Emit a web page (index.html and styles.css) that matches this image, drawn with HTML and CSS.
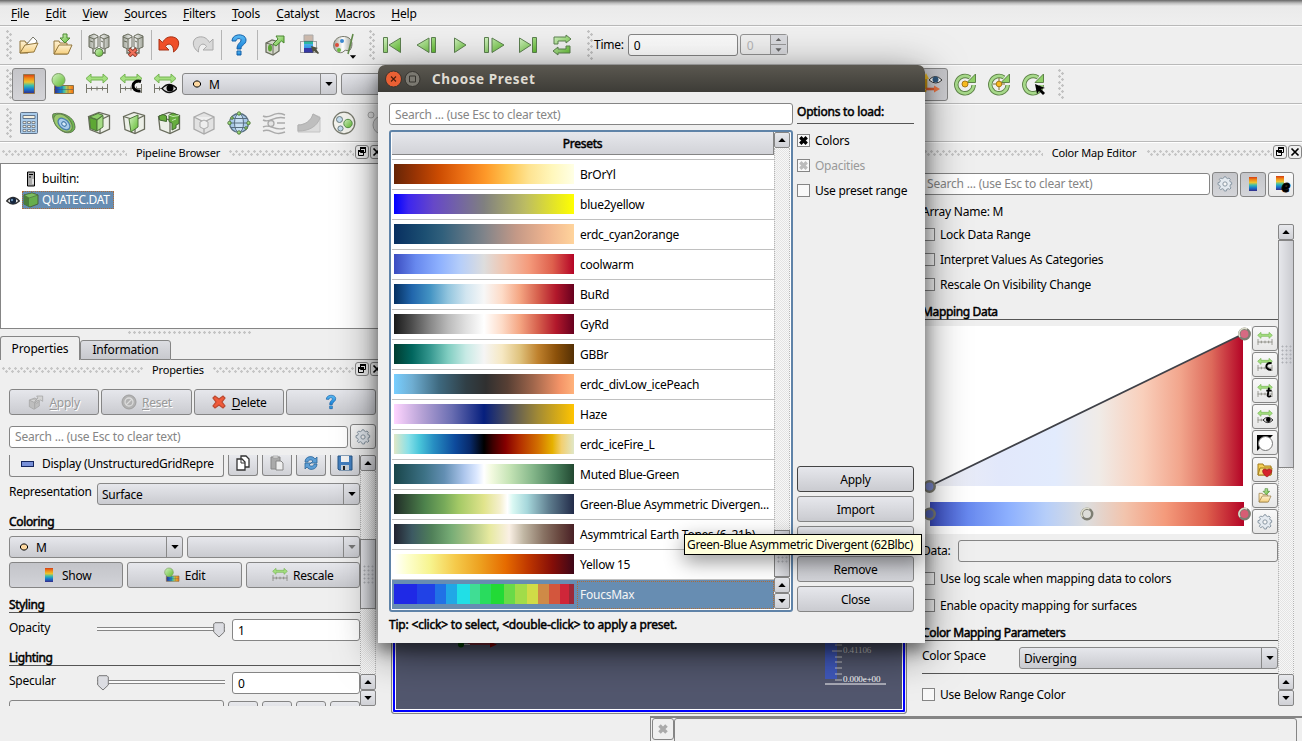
FILE: index.html
```html
<!DOCTYPE html>
<html lang="en">
<head>
<meta charset="utf-8">
<title>ParaView</title>
<link rel="stylesheet" href="styles.css">
</head>
<body>
<svg class="defs" width="0" height="0">
<defs>
<linearGradient id="gg" x1="0" y1="0" x2="1" y2="1"><stop offset="0" stop-color="#d5f3c5"/><stop offset="1" stop-color="#5db92c"/></linearGradient>
<linearGradient id="gf" x1="0" y1="0" x2="0" y2="1"><stop offset="0" stop-color="#fdf0d2"/><stop offset="1" stop-color="#f6cf7c"/></linearGradient>
<linearGradient id="gm" x1="0" y1="0" x2="1" y2="0"><stop offset="0" stop-color="#a3a79c"/><stop offset=".5" stop-color="#fff"/><stop offset="1" stop-color="#a3a79c"/></linearGradient>
<linearGradient id="gv" x1="0" y1="0" x2="0" y2="1"><stop offset="0" stop-color="#d33c14"/><stop offset=".2" stop-color="#f28a16"/><stop offset=".4" stop-color="#e8c530"/><stop offset=".58" stop-color="#38bfae"/><stop offset=".78" stop-color="#1676cf"/><stop offset="1" stop-color="#352a87"/></linearGradient>
<linearGradient id="gh" x1="0" y1="0" x2="1" y2="0"><stop offset="0" stop-color="#352a87"/><stop offset=".3" stop-color="#1676cf"/><stop offset=".5" stop-color="#38bfae"/><stop offset=".7" stop-color="#e8c530"/><stop offset="1" stop-color="#f26a16"/></linearGradient>
<linearGradient id="gb" x1="0" y1="0" x2="0" y2="1"><stop offset="0" stop-color="#5cbcf5"/><stop offset="1" stop-color="#1680d6"/></linearGradient>
<linearGradient id="cw" x1="0" y1="0" x2="1" y2="0"><stop offset="0" stop-color="#3b4cc0"/><stop offset=".12" stop-color="#6788ee"/><stop offset=".25" stop-color="#8db0fe"/><stop offset=".37" stop-color="#b6cef9"/><stop offset=".5" stop-color="#dddddd"/><stop offset=".62" stop-color="#f2c4ad"/><stop offset=".75" stop-color="#f49a7b"/><stop offset=".88" stop-color="#de604d"/><stop offset="1" stop-color="#b40426"/></linearGradient>
<linearGradient id="cwp" x1="0" y1="0" x2="1" y2="0"><stop offset="0" stop-color="#eeeef2"/><stop offset=".22" stop-color="#e2e8fb"/><stop offset=".4" stop-color="#e2ebfd"/><stop offset=".54" stop-color="#f0ebe7"/><stop offset=".68" stop-color="#f9cfbb"/><stop offset=".8" stop-color="#f2a58c"/><stop offset=".9" stop-color="#dd6a5b"/><stop offset="1" stop-color="#b40426"/></linearGradient>
<symbol id="open" viewBox="0 0 24 24"><path d="M3 20V8h5l1 2h2v10z" fill="url(#gf)" stroke="#92763c"/><path d="M9 12l7-8 4 4-5 9z" fill="#fff" stroke="#77776a"/><path d="M3 20l5-8 13-2-4 9z" fill="url(#gf)" stroke="#92763c"/></symbol>
<symbol id="save" viewBox="0 0 24 24"><path d="M3 21V8h5l1 2h7v11z" fill="url(#gf)" stroke="#92763c"/><path d="M3 21l5-9h13l-4 9z" fill="url(#gf)" stroke="#92763c"/><path d="M12 1h4v4h3l-5 5-5-5h3z" fill="url(#gg)" stroke="#4f8a35"/></symbol>
<symbol id="srv" viewBox="0 0 24 24"><path d="M2 3l5-2 4 2v11l-4 2-5-2zM13 3l4-2 5 2v11l-5 2-4-2z" fill="url(#gm)" stroke="#686b5c"/><path d="M2 4l5 2 4-2M13 4l4 2 5-2M7 6v9M17 6v9M3 8l3 1M14 8l2 1" fill="none" stroke="#686b5c"/><path d="M6 16v4h4M18 16v4h-4" fill="none" stroke="#686b5c" stroke-width="1.3"/></symbol>
<symbol id="con" viewBox="0 0 24 24"><use href="#srv" width="24" height="24"/><circle cx="12" cy="19.500" r="4" fill="url(#gg)" stroke="#5b7a48"/></symbol>
<symbol id="dis" viewBox="0 0 24 24"><use href="#srv" width="24" height="24"/><path d="M8 16l7.500 7m0-7L8 23" stroke="#8e3a2a" stroke-width="3.800"/><path d="M8.500 16.500l6.500 6m0-6l-6.500 6" stroke="#f0705a" stroke-width="2.200"/></symbol>
<symbol id="undo" viewBox="0 0 24 24"><path d="M2 6v11h10l-3.500-3.500C11 9 17 11 16.500 19 24 14 23 5 16 4 11.500 3.300 8 5 5.500 9.500z" fill="#ef4f28" stroke="#a83316"/></symbol>
<symbol id="redo" viewBox="0 0 24 24"><path d="M22 6v11H12l3.500-3.500C13 9 7 11 7.500 19 0 14 1 5 8 4c4.500-.7 8 1 10.500 5.500z" fill="#d9d9d9" stroke="#aaa"/></symbol>
<symbol id="help" viewBox="0 0 24 24"><path d="M5 8c0-8 14-8 14-1 0 5-5 4.500-5 9h-4c0-6 4-6 4-9 0-2-5-2-5 1z" fill="url(#gb)" stroke="#1560a8"/><path d="M10 18h4v4h-4z" fill="url(#gb)" stroke="#1560a8"/></symbol>
<symbol id="box" viewBox="0 0 24 24"><path d="M3 10l6-3 7 2v9l-6 4-7-3z" fill="#d2d5c8" stroke="#686b5c" stroke-width="1.300"/><path d="M3 10l7 2 6-3M10 12v10" fill="none" stroke="#686b5c"/><ellipse cx="7" cy="15" rx="2" ry="3.500" fill="#5ca536"/><path d="M10 11l5-5-2-3h8v7l-2.500-2-5.500 5z" fill="url(#gg)" stroke="#4a8530"/></symbol>
<symbol id="sel" viewBox="0 0 24 24"><path d="M7 2h9v6H7z" fill="#cbb8ab" stroke="#aaa"/><path d="M7 8h9v12H7z" fill="url(#gb)"/><path d="M7 8h9v3H7z" fill="#2db8a2"/><path d="M7 15h9v5H7z" fill="#3638a4"/><path d="M3.500 8.500h16v11h-16z" fill="none" stroke="#555" stroke-dasharray="1 1"/><path d="M14 13l7 2-2 1 3 4-1 1-4-3-1 2z" fill="#51513f"/></symbol>
<symbol id="pal" viewBox="0 0 24 24"><path d="M3 15C1 6 9 2 16 4c6 2 6 9 3 13-2 2-4-1-6 1-2 3-8 2-10-3z" fill="url(#gm)" stroke="#77796b"/><circle cx="6" cy="12" r="2" fill="#dd4a38"/><circle cx="11" cy="8" r="2" fill="#3a88cf"/><circle cx="8" cy="17" r="2" fill="#6cba42"/><path d="M22 1l-5 20" stroke="#608948" stroke-width="1.600"/></symbol>
<symbol id="first" viewBox="0 0 24 24"><path d="M3.500 4.500h4v15h-4zM20.500 5v14.500L9 12z" fill="url(#gg)" stroke="#5d8150"/></symbol>
<symbol id="prev" viewBox="0 0 24 24"><path d="M17.500 4.500h4v15h-4zM15 5v14.500L3 12z" fill="url(#gg)" stroke="#5d8150"/></symbol>
<symbol id="play" viewBox="0 0 24 24"><path d="M6.500 5v14.500L18 12z" fill="url(#gg)" stroke="#5d8150"/></symbol>
<symbol id="next" viewBox="0 0 24 24"><path d="M2.500 4.500h4v15h-4zM10 5v14.500L22 12z" fill="url(#gg)" stroke="#5d8150"/></symbol>
<symbol id="last" viewBox="0 0 24 24"><path d="M16.500 4.500h4v15h-4zM3.500 5v14.500L15 12z" fill="url(#gg)" stroke="#5d8150"/></symbol>
<symbol id="loop" viewBox="0 0 24 24"><path d="M4 11V4h12V2l5 4-5 4V8H8v3zM20 13v7H8v2l-5-4 5-4v2h8v-3z" fill="url(#gg)" stroke="#5d8150"/></symbol>
<symbol id="bar" viewBox="0 0 24 24"><path d="M6.500 2.500h11v19h-11z" fill="url(#gv)" stroke="#93754b"/></symbol>
<symbol id="edit" viewBox="0 0 24 24"><path d="M3.500 13.500h19v8h-19z" fill="url(#gh)" stroke="#887249"/><path d="M3 17.500h19M11 14v7M17 14v7" stroke="#3a5170" stroke-opacity=".5"/><circle cx="7.500" cy="8" r="6.500" fill="url(#gg)" stroke="#7ea066"/></symbol>
<symbol id="arr" viewBox="0 0 24 24"><path d="M1 6.500L6 2v3h12V2l5 4.500L18 11V8H6v3z" fill="#a4e07f" stroke="#74b352"/></symbol>
<symbol id="rul" viewBox="0 0 24 24"><path d="M1.500 12v9M22.500 12v9M1 16.500h22M6.500 14.500v4M12 14.500v4M17.500 14.500v4" fill="none" stroke="#77776c"/></symbol>
<symbol id="rs" viewBox="0 0 24 24"><use href="#arr" width="24" height="24"/><use href="#rul" width="24" height="24"/></symbol>
<symbol id="rc" viewBox="0 0 24 24"><use href="#rs" width="24" height="24"/><path d="M22 9.500c-10-3-11 11-.5 9.500" fill="none" stroke="#000" stroke-width="3"/></symbol>
<symbol id="rt" viewBox="0 0 24 24"><use href="#rs" width="24" height="24"/><path d="M18 7l-2 12q2 3 5 0M14 11.500h8" fill="none" stroke="#000" stroke-width="2.800"/></symbol>
<symbol id="rv" viewBox="0 0 24 24"><use href="#arr" width="24" height="24"/><path d="M1.500 12v9M1 16.500h11M6.500 14.500v4" stroke="#77776c"/><path d="M9 16.500q7-8 15 0-8 8-15 0z" fill="#ddd" stroke="#111" stroke-width="1.300"/><circle cx="17" cy="16" r="3.500"/></symbol>
<symbol id="calc" viewBox="0 0 24 24"><rect x="3.500" y="1.500" width="17" height="21" rx="1" fill="#a9cbea" stroke="#62748a"/><path d="M6 4.500h12v3H6z" fill="#f5f0df" stroke="#62748a"/><path d="M6 10.500h3v2H6zM10.500 10.500h3v2h-3zM15 10.500h3v2h-3zM6 14.500h3v2H6zM10.500 14.500h3v2h-3zM15 14.500h3v2h-3zM6 18.500h3v2H6zM10.500 18.500h3v2h-3zM15 18.500h3v2h-3z" fill="#efede0" stroke="#5b6674" stroke-width=".7"/></symbol>
<symbol id="cont" viewBox="0 0 24 24"><path d="M1 3c9-3 22 3 22 13 0 5-6 7-11 5C5 18-1 8 1 3z" fill="#6eba4e" stroke="#617653"/><ellipse cx="11" cy="12" rx="11" ry="7" transform="rotate(43 11 12)" fill="#9cc96f" stroke="#61804e"/><ellipse cx="12" cy="13" rx="7" ry="4.500" transform="rotate(43 12 13)" fill="#a9cceb" stroke="#4a7eac" stroke-width="1.300"/><ellipse cx="12" cy="13" rx="2.500" ry="2" transform="rotate(43 12 13)" fill="#d8eaf8" stroke="#4a7eac"/></symbol>
<symbol id="cube" viewBox="0 0 24 24"><path d="M1.500 5.500L12 1.500l10.500 3V18L13 22.500l-10-4z" fill="#ecefe7" stroke="#686b5c" stroke-width="1.300"/><path d="M1.500 5.500L13 9l9.500-4.500M13 9v13.500" fill="none" stroke="#686b5c" stroke-width="1.300"/></symbol>
<symbol id="clip" viewBox="0 0 24 24"><use href="#cube" width="24" height="24"/><path d="M2.500 6.500L10 9v11l-6.500-2.500z" fill="#5da834" stroke="#4e753b"/><path d="M10 9l6-4.500V16l-6 4z" fill="#a5dc85" stroke="#4e753b"/><path d="M2.500 6L11 2.500l5 1.700L10 8.500z" fill="#8fd06a" stroke="#4e753b"/></symbol>
<symbol id="slice" viewBox="0 0 24 24"><use href="#cube" width="24" height="24"/><path d="M7 8l9-4v12l-7 5z" fill="url(#gg)" stroke="#4e753b"/></symbol>
<symbol id="thr" viewBox="0 0 24 24"><use href="#cube" width="24" height="24"/><path d="M2 5l4-1.500L9.500 5v5.500L2.500 9zM12 4l4-2 6 2.500v8l-3 1.500v3l-4 2v-7l-3-1.500z" fill="#66ad3d" stroke="#436832"/><path d="M12 4l4 1.500 6-1M15 9.500l4-1.500" fill="none" stroke="#c6e8b2"/></symbol>
<symbol id="ext" viewBox="0 0 24 24"><path d="M2 6l10-4.500L22 6v12l-10 5-10-5zM2 6l10 5 10-5M12 11v12" fill="#e2e2e2" stroke="#aaa" stroke-width="1.300"/><path d="M8 11l4-2 4 2v5l-4 2-4-2z" fill="#eee" stroke="#aaa"/></symbol>
<symbol id="glyph" viewBox="0 0 24 24"><circle cx="12" cy="12" r="9.500" fill="#a9c9e8" stroke="#586e80" stroke-width="1.300"/><ellipse cx="12" cy="12" rx="4.500" ry="9.500" fill="#c7dff3" stroke="#586e80"/><path d="M2.500 12h19M4 7.500h16M4 16.500h16" stroke="#586e80"/><g fill="url(#gg)" stroke="#567d42"><circle cx="12" cy="2.500" r="1.700"/><circle cx="12" cy="21.500" r="1.700"/><circle cx="2.500" cy="12" r="1.700"/><circle cx="21.500" cy="12" r="1.700"/><circle cx="5" cy="7" r="1.300"/><circle cx="19" cy="17" r="1.300"/></g></symbol>
<symbol id="stream" viewBox="0 0 24 24"><path d="M1 5c8 4 10-6 22-1M1 9c8 4 10-5 22-2M1 20c8-4 10 6 22 1M1 16c8-4 11 5 22 1M15 12h8" fill="none" stroke="#aaa" stroke-width="1.400"/><circle cx="9" cy="12.500" r="3" fill="#e5e5e5" stroke="#aaa" stroke-width="1.300"/></symbol>
<symbol id="warp" viewBox="0 0 24 24"><path d="M1 21V14c7 0 13-4 15-11l7 3v15z" fill="#dcdcdc" stroke="#c4c4c4"/><path d="M1 14c7 0 13-4 15-11l7 4c-3 8-10 13-22 13z" fill="#bebebe" stroke="#b2b2b2"/></symbol>
<symbol id="grp" viewBox="0 0 24 24"><circle cx="12" cy="12" r="10.800" fill="#f4f4ee" stroke="#77796d" stroke-width="1.300"/><circle cx="7.500" cy="8.500" r="3" fill="#c5ddef" stroke="#687b7e"/><circle cx="16" cy="12.500" r="4.200" fill="url(#gg)" stroke="#57904a"/><circle cx="8.500" cy="17.500" r="2.600" fill="#c5ddef" stroke="#687b7e"/></symbol>
<symbol id="lev" viewBox="0 0 24 24"><g fill="#e2e2e2" stroke="#aaa"><circle cx="4" cy="4" r="3"/><circle cx="15" cy="14" r="9"/></g></symbol>
<symbol id="rot" viewBox="0 0 24 24"><path d="M17 5.500A8.700 8.700 0 1 0 20.700 13" fill="none" stroke="#5e8348" stroke-width="4.500"/><path d="M17 5.500A8.700 8.700 0 1 0 20.700 13" fill="none" stroke="#a7d98a" stroke-width="2.600"/><path d="M22.500 2v8.500H14z" fill="#8fd067" stroke="#5e8348"/></symbol>
<symbol id="r1" viewBox="0 0 24 24"><use href="#rot" width="24" height="24"/><circle cx="12" cy="12" r="3" fill="#f8bb20" stroke="#a87918"/></symbol>
<symbol id="r2" viewBox="0 0 24 24"><use href="#rot" width="24" height="24"/><path d="M12 6v12M6 12h12" stroke="#807030"/><circle cx="12" cy="12" r="2.800" fill="#f8bb20" stroke="#a87918"/></symbol>
<symbol id="r3" viewBox="0 0 24 24"><use href="#rot" width="24" height="24"/><path d="M14 12l10 4-4 1 4 4-2 2-4-4-2 3z"/></symbol>
<symbol id="axes" viewBox="0 0 24 24"><path d="M7 18L1 23M7 17V5" stroke="#c59312" stroke-width="2.600"/><path d="M7 1l3 6H4z" fill="#e4b325"/><path d="M7 17h9" stroke="#d75b30" stroke-width="2.600"/><path d="M21 17l-6-3.500v7z" fill="#ed7542"/><path d="M10 8q6-7 13 0-6 6-13 0z" fill="#fff" stroke="#333"/><circle cx="16.500" cy="7.500" r="3" fill="#30587d"/></symbol>
<symbol id="gear" viewBox="0 0 24 24"><path d="M10 3l1-2h2l1 2 2 1 2-1 2 2-1 2 1 2 2 .5v3L20 13l-.5 2.500L21 18l-2 2-2-1-2.500 1L14 22.500h-3L10 20l-2-1-2.500 1.500-2-2L5 16l-1-2-2.500-1v-3L4 9.500 5 7 3.500 5l2-2L8 4z" fill="#e4eaf0" stroke="#8997a3" stroke-width="1.500"/><circle cx="12" cy="12" r="3.200" fill="#f7f7f7" stroke="#8997a3" stroke-width="1.500"/></symbol>
<symbol id="float" viewBox="0 0 12 12"><path d="M4.500 2.500h5v4h-5zM2.500 5.500h5v4h-5z" fill="#efefef" stroke="#000"/><path d="M4 2h6M2 5h6" stroke="#000" stroke-width="1.800"/></symbol>
<symbol id="x" viewBox="0 0 12 12"><path d="M2.500 2.500l7 7m0-7l-7 7" stroke="#000" stroke-width="1.700"/></symbol>
<symbol id="cross" viewBox="0 0 12 12"><path d="M2.500 2.500l7 7m0-7l-7 7" stroke="currentColor" stroke-width="3.600"/></symbol>
<symbol id="up" viewBox="0 0 12 12"><path d="M2.300 8h7.400L6 4z" fill="currentColor"/></symbol>
<symbol id="dn" viewBox="0 0 12 12"><path d="M2.300 4h7.400L6 8z" fill="currentColor"/></symbol>
<symbol id="pt" viewBox="0 0 12 12"><path d="M4.500 3h3l2 2v2l-2 2h-3l-2-2V5z" fill="#fdd8a0" stroke="#000"/></symbol>
<symbol id="srvs" viewBox="0 0 12 16"><path d="M2.500 1h7v14h-7z" fill="#aaa" stroke="#000"/><path d="M4 3.500h4M4 6h2" stroke="#000"/><path d="M7 8h2v5H7z" fill="#ddd"/></symbol>
<symbol id="eye" viewBox="0 0 14 12"><path d="M.7 6Q7-1 13.300 6 7 12 .7 6z" fill="#fff" stroke="#333" stroke-width="1.400"/><circle cx="7" cy="5.700" r="3.200" fill="#16263d"/><circle cx="6" cy="5" r="1.200" fill="#6d93b8"/></symbol>
<symbol id="gcube" viewBox="0 0 16 16"><path d="M1 3l8-2 6 2v9l-8 3-6-3z" fill="#66ae4d" stroke="#4a653f"/><path d="M1 3l5 3 9-3-6-2z" fill="#7cbf60" stroke="#4a653f" stroke-width=".6"/><path d="M1 3l5 3v9l-5-3z" fill="#4b7e3b"/></symbol>
<symbol id="ban" viewBox="0 0 16 16"><circle cx="8" cy="8" r="7" fill="#b2b2b2" stroke="#a0a0a0"/><circle cx="8" cy="8" r="4" fill="none" stroke="#dcdcdc" stroke-width="1.300"/><path d="M5 11l6-6" stroke="#dcdcdc" stroke-width="1.300"/></symbol>
<symbol id="apl" viewBox="0 0 24 24"><path d="M2 9l8-3 7 3v9l-8 5-7-4z" fill="#bebebe" stroke="#a0a0a0"/><path d="M2 9l8 4 7-4M10 13v9M10 11l5-5-2-3h9v8l-3-2-6 5z" fill="#d4d4d4" stroke="#9d9d9d"/></symbol>
<symbol id="del" viewBox="0 0 16 16"><path d="M2 4l2-2 4 3 4-3 2 2-3 4 3 4-2 2-4-3-4 3-2-2 3-4z" fill="#f05a3a" stroke="#ba4931" stroke-width="1.200"/></symbol>
<symbol id="copy" viewBox="0 0 16 16"><path d="M6 1h5l3 3v8H6z" fill="#fff" stroke="#333" stroke-width="1.300"/><path d="M2 4h5l3 3v8H2z" fill="#fff" stroke="#333" stroke-width="1.300"/><path d="M6 4v4h4" fill="none" stroke="#333"/></symbol>
<symbol id="paste" viewBox="0 0 16 16"><path d="M2 2h9v12H2z" fill="#aaa" stroke="#888"/><path d="M7 6h5l2 2v7H7z" fill="#eee" stroke="#888"/><path d="M4 1h5v2H4z" fill="#ddd" stroke="#999" stroke-width=".6"/></symbol>
<symbol id="ref" viewBox="0 0 16 16"><path d="M2 7c0-6 8-7 10-3l2-2v6H8l2-2C8 4 5 5 5 7zM14 9c0 6-8 7-10 3l-2 2V8h6l-2 2c2 2 5 1 5-1z" fill="#5c9ed5" stroke="#2c6598" stroke-width=".8"/></symbol>
<symbol id="disk" viewBox="0 0 16 16"><path d="M1 1h14v14H2l-1-1z" fill="#437fbf" stroke="#285986"/><path d="M4 1h8v6H4z" fill="#f5f5f5"/><path d="M4 10h8v5H4z" fill="#c9d2da"/><path d="M6 11h2v4H6z" fill="#222"/></symbol>
<symbol id="bare" viewBox="0 0 16 16"><path d="M4 1h8v14H4z" fill="url(#gv)"/></symbol>
<symbol id="inv" viewBox="0 0 16 16"><path d="M0 0h16L8 8 0 16z"/><circle cx="8.500" cy="8.500" r="7" fill="#fff" stroke="#777"/></symbol>
<symbol id="fav" viewBox="0 0 16 16"><path d="M1 13V2h5l1 2h7v9z" fill="#f4cf55" stroke="#a37c1b"/><path d="M3 6h12l-1 7H1z" fill="#f9df80" stroke="#a37c1b"/><path d="M10 15C4 11 5 7 8 7q2 0 2 2 0-2 2-2c4 0 4 4-2 8z" fill="#d6232b" stroke="#8e1319" stroke-width=".6"/></symbol>
</defs>
</svg>

<div class="app">
<div class="menubar"><span><u>F</u>ile</span><span><u>E</u>dit</span><span><u>V</u>iew</span><span><u>S</u>ources</span><span><u>F</u>ilters</span><span><u>T</u>ools</span><span><u>C</u>atalyst</span><span><u>M</u>acros</span><span><u>H</u>elp</span></div>

<div class="toolbar t1">
<i class="grip"></i><b><svg><use href="#open"/></svg></b><b><svg><use href="#save"/></svg></b><i class="sep"></i><b><svg><use href="#con"/></svg></b><b><svg><use href="#dis"/></svg></b><i class="sep"></i><b><svg><use href="#undo"/></svg></b><b><svg><use href="#redo"/></svg></b><i class="sep"></i><b><svg><use href="#help"/></svg></b><i class="sep"></i><b><svg><use href="#box"/></svg></b><b><svg><use href="#sel"/></svg></b><b class="drop"><svg><use href="#pal"/></svg><svg class="caret"><use href="#dn"/></svg></b><i class="grip g2"></i><b><svg><use href="#first"/></svg></b><b><svg><use href="#prev"/></svg></b><b><svg><use href="#play"/></svg></b><b><svg><use href="#next"/></svg></b><b><svg><use href="#last"/></svg></b><b><svg><use href="#loop"/></svg></b><i class="grip g3"></i><span class="time">Time:</span><span class="field timef">0</span><span class="spin"><em>0</em><span class="arrows"><svg><use href="#up"/></svg><svg><use href="#dn"/></svg></span></span>
</div>
<div class="toolbar t2">
<i class="grip"></i><b class="pressed"><svg><use href="#bar"/></svg></b><b><svg><use href="#edit"/></svg></b><b><svg><use href="#rs"/></svg></b><b><svg><use href="#rc"/></svg></b><b><svg><use href="#rv"/></svg></b><span class="combo c1"><svg class="pt"><use href="#pt"/></svg><em>M</em><span><svg><use href="#dn"/></svg></span></span><span class="combo c2"><em></em></span><i class="gap"></i><b class="pressed"><svg><use href="#axes"/></svg></b><b><svg><use href="#r1"/></svg></b><b><svg><use href="#r2"/></svg></b><b><svg><use href="#r3"/></svg></b><i class="grip g4"></i>
</div>
<div class="toolbar t3">
<i class="grip"></i><b><svg><use href="#calc"/></svg></b><b><svg><use href="#cont"/></svg></b><b><svg><use href="#clip"/></svg></b><b><svg><use href="#slice"/></svg></b><b><svg><use href="#thr"/></svg></b><b><svg><use href="#ext"/></svg></b><b><svg><use href="#glyph"/></svg></b><b><svg><use href="#stream"/></svg></b><b><svg><use href="#warp"/></svg></b><b><svg><use href="#grp"/></svg></b><b><svg><use href="#lev"/></svg></b>
</div>

<div class="main">
<section class="left">
<div class="dock"><i></i><span>Pipeline Browser</span><i></i><svg><use href="#float"/></svg><svg><use href="#x"/></svg></div>
<div class="tree">
<div class="node root"><svg><use href="#srvs"/></svg><span>builtin:</span></div>
<div class="node"><svg class="eye"><use href="#eye"/></svg><span class="hl"><svg><use href="#gcube"/></svg>QUATEC.DAT</span></div>
</div>
<div class="split"></div>
<div class="tabs"><span class="on">Properties</span><span>Information</span><i></i></div>
<div class="dock d2"><i></i><span>Properties</span><i></i><svg><use href="#float"/></svg><svg><use href="#x"/></svg></div>
<div class="acts"><span class="btn off"><svg><use href="#apl"/></svg><em><u>A</u>pply</em></span><span class="btn off"><svg><use href="#ban"/></svg><em><u>R</u>eset</em></span><span class="btn"><svg><use href="#del"/></svg><em><u>D</u>elete</em></span><span class="btn"><svg><use href="#help"/></svg></span></div>
<div class="find"><span class="field ph">Search ... (use Esc to clear text)</span><span class="tb"><svg><use href="#gear"/></svg></span></div>
<div class="scroll">
<div class="body">
<div class="disp"><span class="dtitle"><i></i><em>Display (UnstructuredGridRepre</em></span><span class="sq"><svg><use href="#copy"/></svg></span><span class="sq"><svg><use href="#paste"/></svg></span><span class="sq"><svg><use href="#ref"/></svg></span><span class="sq"><svg><use href="#disk"/></svg></span></div>
<div class="row rep"><label>Representation</label><span class="combo"><em>Surface</em><span><svg><use href="#dn"/></svg></span></span></div>
<h4 class="h1">Coloring</h4>
<div class="two"><span class="combo a"><svg class="pt"><use href="#pt"/></svg><em>M</em><span><svg><use href="#dn"/></svg></span></span><span class="combo z"><em></em><span><svg><use href="#dn"/></svg></span></span></div>
<div class="three"><span class="btn down"><svg><use href="#bare"/></svg><em>Show</em></span><span class="btn"><svg><use href="#edit"/></svg><em>Edit</em></span><span class="btn"><svg><use href="#rs"/></svg><em>Rescale</em></span></div>
<h4 class="h2">Styling</h4>
<div class="row"><label>Opacity</label><span class="slider end"><svg viewBox="0 0 12 16"><path d="M2 .7h8l1.300 1.300v8L6 15 .7 10V2z" fill="#dcdde2" stroke="#777"/></svg></span><span class="field">1</span></div>
<h4 class="h3">Lighting</h4>
<div class="row"><label>Specular</label><span class="slider"><svg viewBox="0 0 12 16"><path d="M2 .7h8l1.300 1.300v8L6 15 .7 10V2z" fill="#dcdde2" stroke="#777"/></svg></span><span class="field">0</span></div>
<div class="disp cut"><span class="dtitle"></span><span class="sq"></span><span class="sq"></span><span class="sq"></span><span class="sq"></span></div>
</div>
<div class="sb"><b><svg><use href="#up"/></svg></b><i class="track p1"></i><i class="thumb"></i><i class="track p2"></i><b><svg><use href="#up"/></svg></b><b><svg><use href="#dn"/></svg></b></div>
</div>
</section>

<section class="center">
<div class="view"><svg width="512" height="568"><g transform="translate(2 8)"><path d="M74 493h26" stroke="#b00000"/><circle cx="67" cy="493.500" r="3" fill="#004400"/><path d="M70 493.500h6" stroke="#bbb"/><path d="M96 491l7 2.500-7 3z" fill="#8a0000"/><rect x="431" y="480" width="12" height="48" fill="#4059bd"/><path d="M441 494h7M438 500h10M441 506h7M441 511h7M441 517h7M441 523h7M441 529h7" stroke="#c5c5c5"/><path d="M431 533h61" stroke="#fff"/><text x="449" y="502">0.41106</text><text x="449" y="531" class="w">0.000e+00</text></g></svg></div>
</section>

<section class="right">
<div class="dock"><i></i><span>Color Map Editor</span><i></i><svg><use href="#float"/></svg><svg><use href="#x"/></svg></div>
<div class="find rf"><span class="field ph">Search ... (use Esc to clear text)</span><span class="tb dk"><svg><use href="#gear"/></svg></span><span class="tb dk"><svg><use href="#bare"/></svg></span><span class="tb"><svg class="sh"><use href="#bare"/></svg><strong>e</strong></span></div>
<p class="arr">Array Name: M</p>
<div class="rscroll">
<div class="rbody">
<label class="ck"><i></i>Lock Data Range</label>
<label class="ck"><i></i>Interpret Values As Categories</label>
<label class="ck"><i></i>Rescale On Visibility Change</label>
<h4 class="h5">Mapping Data</h4>
<div class="map">
<svg class="plot" width="334" height="208"><rect width="334" height="208" fill="#fff"/><path d="M13 160L326 8v152z" fill="url(#cwp)"/><path d="M13 160L326 8" stroke="#3f4148" stroke-width="1.800"/><rect x="13" y="176" width="314" height="24" fill="url(#cw)"/><g stroke="#7d7d72" stroke-width="2.500"><circle cx="327.500" cy="8" r="5.200" fill="#d66a82"/><circle cx="12.500" cy="160.500" r="5.200" fill="#7d8bd0"/><circle cx="12.500" cy="188" r="5.200" fill="#5465b8"/><circle cx="170" cy="188" r="5.200" fill="#dcdcd8"/><circle cx="327.500" cy="188" r="5.200" fill="#d65d74"/></g><g fill="none" stroke="#dcdccb" stroke-width="1.500"><path d="M323 11a5.500 5.500 0 0 1 7-8M165.500 191a5.500 5.500 0 0 1 7-8M323 191a5.500 5.500 0 0 1 7-8"/></g></svg>
<div class="side"><b><svg><use href="#rs"/></svg></b><b><svg><use href="#rc"/></svg></b><b><svg><use href="#rt"/></svg></b><b><svg><use href="#rv"/></svg></b><b><svg><use href="#inv"/></svg></b><b class="sk"><svg><use href="#fav"/></svg></b><b><svg><use href="#save"/></svg></b><b><svg><use href="#gear"/></svg></b></div>
</div>
<div class="data"><span>Data:</span><span class="field"></span></div>
<label class="ck k4"><i></i>Use log scale when mapping data to colors</label>
<label class="ck k5"><i></i>Enable opacity mapping for surfaces</label>
<h4 class="h6">Color Mapping Parameters</h4>
<div class="space"><span>Color Space</span><span class="combo"><em>Diverging</em><span><svg><use href="#dn"/></svg></span></span></div>
<label class="ck k6"><i></i>Use Below Range Color</label>
</div>
<div class="sb"><b><svg><use href="#up"/></svg></b><i class="thumb"></i><i class="track p2"></i><b><svg><use href="#up"/></svg></b><b><svg><use href="#dn"/></svg></b></div>
</div>
</section>
</div>
<div class="status"><span class="sx"><svg><use href="#cross"/></svg></span><span class="prog"></span></div>
</div>

<div class="dialog">
<div class="title"><svg width="40" height="20"><circle cx="9.500" cy="10" r="8" fill="#ea6034" stroke="#36342f"/><path d="M7 7.500l5 5m0-5l-5 5" stroke="#4c1d0c" stroke-width="1.100"/><circle cx="28.500" cy="10" r="7.500" fill="#7b7971" stroke="#36342f"/><path d="M25.500 7h6v6h-6z" fill="none" stroke="#36342f"/></svg><span>Choose Preset</span></div>
<div class="dbody">
<div class="dl">
<span class="field ph">Search ... (use Esc to clear text)</span>
<div class="list">
<div class="rows">
<div class="head">Presets</div>
<div class="p z0"></div>
<div class="p"><i class="m1"></i><span>BrOrYl</span></div>
<div class="p"><i class="m2"></i><span>blue2yellow</span></div>
<div class="p"><i class="m3"></i><span>erdc_cyan2orange</span></div>
<div class="p"><i class="m4"></i><span>coolwarm</span></div>
<div class="p"><i class="m5"></i><span>BuRd</span></div>
<div class="p"><i class="m6"></i><span>GyRd</span></div>
<div class="p"><i class="m7"></i><span>GBBr</span></div>
<div class="p"><i class="m8"></i><span>erdc_divLow_icePeach</span></div>
<div class="p"><i class="m9"></i><span>Haze</span></div>
<div class="p"><i class="m10"></i><span>erdc_iceFire_L</span></div>
<div class="p"><i class="m11"></i><span>Muted Blue-Green</span></div>
<div class="p"><i class="m12"></i><span>Green-Blue Asymmetric Divergen...</span></div>
<div class="p"><i class="m13"></i><span>Asymmtrical Earth Tones (6_21b)</span></div>
<div class="p"><i class="m14"></i><span>Yellow 15</span></div>
<div class="p cur"><i class="m15"></i><span>FoucsMax</span></div>
</div>
<div class="sb"><b><svg><use href="#up"/></svg></b><i class="track p2"></i><i class="thumb"></i><b><svg><use href="#up"/></svg></b><b><svg><use href="#dn"/></svg></b></div>
</div>
<p class="tip">Tip: &lt;click&gt; to select, &lt;double-click&gt; to apply a preset.</p>
</div>
<div class="dr">
<h4>Options to load:</h4>
<label class="ck"><i><svg><use href="#cross"/></svg></i>Colors</label>
<label class="ck no"><i><svg><use href="#cross"/></svg></i>Opacities</label>
<label class="ck"><i></i>Use preset range</label>
<div class="btns"><span class="btn def">Apply</span><span class="btn">Import</span><span class="btn">Export</span><span class="btn down">Remove</span><span class="btn">Close</span></div>
</div>
</div>
</div>
<div class="tooltip">Green-Blue Asymmetric Divergent (62Blbc)</div>
</body>
</html>
```
FILE: styles.css
```css
* { box-sizing: border-box; }
html, body { margin: 0; width: 1302px; height: 741px; overflow: hidden; }
body { position: relative; background: #efefef; color: #000; font: 12px/16px "Noto Sans", "Open Sans", sans-serif; letter-spacing: -.25px; white-space: nowrap; }
.defs { position: absolute; }
svg { display: block; flex: none; }
i, em { font-style: normal; }
h4, p { margin: 0; }
h4, .head, .tip { font-weight: 400; -webkit-text-stroke: .5px #000; }
h4 { letter-spacing: -.35px; }
u { text-decoration-thickness: 1px; text-underline-offset: 2px; }

.app { width: 1302px; height: 741px; display: flex; flex-direction: column; }
.menubar { height: 26px; flex: none; display: flex; padding: 6px 0 0 11px; border-bottom: 1px solid #b9b9b9; background: linear-gradient(#666, #bbb 3px, #eaeaea 6px, #efefef); }
.menubar span { margin-right: 16.400px; }
.toolbar { height: 39px; flex: none; display: flex; align-items: center; padding: 0 0 1px 6px; border-top: 1px solid #fbfbfb; border-bottom: 1px solid #b9b9b9; }
.t1 { padding-bottom: 2px; }
.t3 { height: 38px; padding-bottom: 0; }
.toolbar b { width: 35px; height: 34px; display: flex; flex: none; align-items: center; justify-content: center; }
.toolbar b svg { width: 24px; height: 24px; }
.t1 b, .t2 b { width: 34px; }
.grip { width: 6px; height: 30px; flex: none; background: radial-gradient(circle at 1.500px 1.500px, #c2c2c2 1px, transparent 1.500px) 0 0/6px 6px, radial-gradient(circle at 4.500px 4.500px, #c2c2c2 1px, transparent 1.500px) 0 0/6px 6px; }
.t3 > .grip:first-child { margin-right: -1px; }
.sep { width: 1px; height: 30px; background: #b5b5b5; margin: 0 .5px; }
.drop { position: relative; }
.toolbar .caret { position: absolute; width: 10px; height: 10px; right: 2px; bottom: 0; }
.g2 { margin: 0 0 0 9px; }
.g3 { margin-left: 8px; }
.time { margin: 0 4px 0 1px; }
.field { display: block; height: 22px; padding: 3px 5px 0; border: 1px solid #858585; border-radius: 3px; background: #fff; }
.timef { width: 110px; background: linear-gradient(#f8f8f8, #fff); }
.ph { color: #858585; letter-spacing: -.2px; }
.spin { width: 48px; height: 21px; margin-left: 2px; border: 1px solid #929292; border-radius: 3px; display: flex; color: #b5b5b5; }
.spin em { flex: 1; padding: 3px 6px 0; }
.arrows { width: 17px; border-left: 1px solid #999; background: #d9dade; color: #666; }
.arrows svg { width: 15px; height: 10px; }
.arrows svg:first-child { border-bottom: 1px solid #999; }
.toolbar .pressed { height: 33px; border: 1px solid #858585; border-radius: 3px; background: linear-gradient(#c5c5c9, #d4d4d8); }
.combo { height: 22px; display: flex; align-items: center; border: 1px solid #888; border-radius: 3px; background: linear-gradient(#e6e7ec, #cacbd0); }
.combo em { flex: 1; padding: 1px 0 0 4px; }
.combo > span { width: 16px; height: 100%; border-left: 1px solid #888; display: flex; align-items: center; justify-content: center; }
.combo svg { width: 12px; height: 12px; }
.combo .pt { margin: 0 2px 0 8px; }
.c1 { width: 155px; }
.c2 { width: 155px; margin-left: 4px; }
.gap { width: 418px; }
.g4 { margin-left: 8px; }

.main { height: 573px; flex: none; display: flex; }
.left { width: 379px; flex: none; }
.dock { height: 21px; display: flex; align-items: center; gap: 1px; padding: 0 0 0 2px; border-top: 1px solid #fff; }
.dock i { flex: 1; height: 6px; background: radial-gradient(circle at 1.500px 1.500px, #c6c6c6 1px, transparent 1.500px) 0 0/6px 6px, radial-gradient(circle at 4.500px 4.500px, #c6c6c6 1px, transparent 1.500px) 0 0/6px 6px; }
.dock span { padding: 0 8px; font-size: 11px; letter-spacing: -.15px; }
.dock svg { width: 14px; height: 14px; border: 1px solid #858585; border-radius: 3px; margin-top: -2px; }
.left .dock { width: 384px; }
.right .dock span { padding-right: 10px; }
.tree { height: 166px; background: #fff; border: 1px solid #858585; padding: 4px 0 0 5px; }
.node { display: flex; align-items: center; height: 22px; }
.root { padding-left: 19px; gap: 5px; }
.root svg { width: 12px; height: 16px; }
.eye { width: 14px; height: 12px; margin-right: 2px; }
.hl { height: 18px; display: flex; align-items: center; margin-top: -2px; padding-right: 3px; background: #678db2; color: #fff; border: 1px dotted #b06c36; background-clip: border-box; letter-spacing: -.35px; }
.hl svg { width: 16px; height: 16px; margin-right: 3px; }
.split { width: 123px; height: 7px; margin-left: 128px; background: radial-gradient(circle at 1.500px 3.500px, #c4c4c4 1px, transparent 1.500px) 0 0/5px 7px; }
.tabs { height: 24px; display: flex; align-items: flex-end; }
.tabs span { width: 91px; height: 20px; border: 1px solid #858585; border-radius: 3px 3px 0 0; text-align: center; padding-top: 1px; background: linear-gradient(#dcdde2, #c8c9ce); letter-spacing: -.15px; }
.tabs .on { width: 80px; height: 24px; border-bottom: 0; background: #efefef; padding-top: 4px; }
.tabs i { flex: 1; border-bottom: 1px solid #858585; }
.d2 { border: 0; height: 20px; }
.acts { display: flex; gap: 2px; padding: 9px 3px 0 9px; }
.btn { height: 26px; display: flex; align-items: center; justify-content: center; border: 1px solid #858585; border-radius: 3px; background: linear-gradient(#e6e7ec, #cacbd0); }
.btn em { padding-top: 1px; }
.acts .btn { width: 90.500px; gap: 5px; }
.btn svg { width: 16px; height: 16px; }
.off { color: #999; text-shadow: 1px 1px #fff; }
.find { display: flex; gap: 2px; padding: 9px 0 0 9px; align-items: center; height: 34px; }
.find .field { width: 339px; padding-top: 2px; }
.tb { width: 26px; height: 25px; display: flex; align-items: center; justify-content: center; border: 1px solid #858585; border-radius: 3px; background: linear-gradient(#fbfbfb, #e8e8e8); position: relative; }
.tb svg { width: 16px; height: 16px; }
.tb .sh { margin: -2px 3px 0 0; }
.tb strong { position: absolute; right: 3px; bottom: 2px; font: italic 900 15px/16px "Noto Sans", sans-serif; -webkit-text-stroke: .8px #000; }
.dk { background: linear-gradient(#c5c6ca, #d4d5d9); }
.scroll { display: flex; height: 251px; margin: 6px 0 0 9px; overflow: hidden; }
.body { width: 351px; flex: none; overflow: hidden; }
.disp { display: flex; gap: 4px; height: 22px; }
.dtitle { width: 215px; height: 22px; padding: 1px 8px 0 11px; display: flex; align-items: center; border: 1px solid #858585; border-top: 0; border-radius: 0 0 3px 3px; }
.dtitle i { width: 13px; height: 6px; background: #7890d8; border: 1px solid #15265f; margin: -5px 8px 0 0; flex: none; }
.dtitle em { margin-top: -4px; letter-spacing: -.27px; }
.sq { width: 30px; height: 21px; display: flex; justify-content: center; border: 1px solid #858585; border-top: 0; border-radius: 0 0 3px 3px; background: linear-gradient(#e8e9ed, #d0d1d6); }
.sq svg { width: 16px; height: 16px; }
.row { display: flex; height: 22px; }
.row label { width: 88px; padding-top: 1px; }
.rep { margin-top: 6px; }
.row .combo { width: 263px; }
.row .field { width: 128px; margin-left: 7px; }
.body h4, .rbody h4 { border-bottom: 1px solid #555; height: 17px; padding-top: 1px; }
.body .h1 { margin: 8px 0 6px; }
.two { display: flex; gap: 4px; }
.two .a { width: 174px; }
.two .z { width: 173px; color: #777; }
.three { display: flex; gap: 4px; margin-top: 4px; }
.three .btn { flex: 1; gap: 5px; }
.down { background: linear-gradient(#c3c4c9, #d2d3d8); }
.body .h2 { margin: 8px 0 6px; }
.body .h3 { margin: 8px 0 6px; }
.slider { width: 128px; display: flex; height: 21px; align-items: center; background: linear-gradient(#858585 1px, #fafafa 1px 3px, #858585 3px) 0 8px/128px 4px no-repeat; }
.slider svg { width: 12px; height: 16px; }
.end { justify-content: flex-end; }
.cut { margin-top: 6px; }
.cut .dtitle, .cut .sq { border-top: 1px solid #858585; border-radius: 3px; }
.cut .sq { margin-top: 1px; }
.sb { width: 16px; flex: none; display: flex; flex-direction: column; }
.sb b { height: 16px; flex: none; display: flex; align-items: center; justify-content: center; border: 1px solid #858585; border-radius: 2px; background: linear-gradient(#e8e9ed, #cfd0d5); }
.sb svg { width: 12px; height: 12px; }
.track { border: 1px dotted #b5b5b5; border-width: 0 1px; background: repeating-conic-gradient(#e4e4e4 0 25%, #f7f7f7 0 50%) 0 0/2px 2px; }
.thumb { border: 1px solid #858585; background: linear-gradient(90deg, #e6e7eb, #cacbd0); display: flex; align-items: center; justify-content: center; }
.thumb::after { content: ""; width: 11px; height: 19px; background: radial-gradient(circle at 1.500px 1.500px, #aeb0b5 .8px, transparent 1.200px) 0 0/4px 4px; }
.p1 { height: 68px; }
.scroll .thumb { height: 70px; }
.p2 { flex: 1; }

.center { width: 537px; flex: none; padding-left: 12px; }
.view { width: 516px; height: 572px; border: 1px solid #858585; border-radius: 3px; background: #52576e; box-shadow: inset 0 0 0 1px #efefef, inset 0 0 0 3px #00f, inset 0 0 0 4px #fff; }
.view text { font: 9px "Liberation Serif", serif; fill: #c9c9c9; letter-spacing: -.1px; }
.view .w { fill: #fff; }

.right { width: 386px; flex: none; }
.rf { padding: 7px 0 0 1px; height: 35px; }
.rf .field { width: 293px; padding-left: 9px; }
.arr { height: 26px; padding: 6px 0 0 6px; }
.rscroll { display: flex; height: 482px; padding-left: 6px; }
.rbody { width: 356px; flex: none; }
.ck { display: flex; align-items: center; height: 25px; gap: 5px; }
.ck i { width: 13px; height: 13px; border: 1px solid #858585; background: #f9f9f9; }
.ck svg { width: 11px; height: 11px; }
.rbody > .ck:first-child { margin-top: -2px; }
.rbody .h5 { margin: 6px 0 6px; }
.rbody > .ck { height: 25px; }
.map { display: flex; margin-left: -5px; }
.plot { margin-right: 1px; }
.side { width: 26px; }
.side b { width: 26px; height: 25px; margin-bottom: 1px; display: flex; align-items: center; justify-content: center; border: 1px solid #858585; border-radius: 3px; background: linear-gradient(#f9f9f9, #e7e7e7); }
.side .sk { margin-top: 2px; }
.side svg { width: 16px; height: 16px; }
.data { display: flex; gap: 6px; margin-top: 5px; align-items: center; }
.data span:first-child { width: 30px; }
.data .field { width: 320px; background: #efefef; }
.rbody .k4 { margin-top: 4px; }
.rbody .k5 { margin-top: 2px; }
.rbody .h6 { margin: 6px 0 6px; }
.space { height: 27px; display: flex; border-bottom: 1px solid #555; }
.space span:first-child { width: 97px; padding-top: 1px; }
.space .combo { width: 259px; }
.rbody .k6 { margin-top: 8px; }
.rscroll .thumb { height: 228px; }
.status { height: 25px; margin: 1px 0 0 650px; display: flex; border-top: 2px solid #858585; border-left: 1px solid #858585; padding: 0 0 0 1px; }
.sx { width: 22px; height: 22px; border: 1px solid #858585; border-radius: 3px; color: #aaa; padding: 4px; }
.sx svg { width: 12px; height: 12px; }
.prog { width: 623px; height: 30px; border: 1px solid #858585; border-radius: 3px; }

.dialog { position: absolute; left: 378px; top: 65px; width: 547px; height: 578px; border-radius: 7px 7px 0 0; background: #efefef; box-shadow: 0 9px 42px rgba(0, 0, 0, .55), 0 8px 14px rgba(0, 0, 0, .35); }
.title { height: 27px; display: flex; align-items: center; padding-left: 6px; gap: 8px; border-radius: 7px 7px 0 0; background: linear-gradient(#5b5850, #3d3c37); color: #dfdbd2; font: 700 13.500px/20px "Noto Sans", sans-serif; letter-spacing: .6px; }
.dbody { display: flex; gap: 4px; padding: 11px 11px 0; }
.dl { width: 404px; }
.list { height: 482px; margin-top: 5px; display: flex; border: 2px solid #5f83a8; border-radius: 3px; padding: 0 0 1px 1px; background: #fff; }
.rows { width: 382px; overflow: hidden; }
.head { height: 23px; padding-top: 4px; text-align: center; background: linear-gradient(#e6e7ec, #d2d3d8); border-bottom: 1px solid #858585; border-right: 1px solid #858585; }
.p { height: 30px; display: flex; align-items: center; gap: 6px; padding: 0 0 0 2px; border-bottom: 1px solid #c0c0c0; }
.p i { width: 180px; height: 20px; flex: none; margin-top: -1px; }
.z0 { height: 5px; }
.cur { background: #678db2; color: #f5f5f5; gap: 3px; }
.cur span { flex: 1; height: 28px; border: 1px dotted #b06c36; padding: 5px 0 0 2px; }
.list .thumb { height: 47px; }
.tip { margin-top: 5px; letter-spacing: -.2px; }
.dr { width: 117px; }
.dr h4 { height: 21px; padding-top: 1px; border-bottom: 1px solid #555; letter-spacing: -.2px; }
.dr .ck:nth-of-type(1) { margin-top: 4px; }
.no { color: #999; }
.no i { color: #bbb; }
.btns { display: flex; flex-direction: column; gap: 4px; margin-top: 263px; }
.btns .btn { padding-top: 2px; }
.def { border-color: #444; }
.tooltip { position: absolute; left: 684px; top: 534px; width: 238px; height: 21px; padding: 2px; border: 1px solid #000; background: #ffffdc; box-shadow: 0 6px 20px rgba(0, 0, 0, .45); letter-spacing: -.35px; }

.m1 { background: linear-gradient(90deg, #662506, #993404 12%, #cc4c02 25%, #ec7014 38%, #fe9929 51%, #fec44f 63%, #fee391 75%, #fff7bc 88%, #ffffe5); }
.m2 { background: linear-gradient(90deg, #00f, #3d26ef 8%, #6648c8 22%, #808080 50%, #bcbc62 73%, #ff0); }
.m3 { background: linear-gradient(90deg, #082f60, #1c4f72 17%, #31607c 27%, #80848a 50%, #c49987 68%, #efb48f 85%, #ffd49c); }
.m4 { background: linear-gradient(90deg, #3b4cc0, #6788ee 12%, #8db0fe 25%, #b6cef9 37%, #ddd 50%, #f2c4ad 62%, #f49a7b 75%, #de604d 88%, #b40426); }
.m5 { background: linear-gradient(90deg, #053061, #2166ac 10%, #4393c3 20%, #92c5de 30%, #d1e5f0 40%, #f7f7f7 50%, #fddbc7 60%, #f4a582 70%, #d6604d 80%, #b2182b 90%, #67001f); }
.m6 { background: linear-gradient(90deg, #1a1a1a, #4d4d4d 10%, #878787 20%, #bababa 30%, #e0e0e0 40%, #fff 50%, #fddbc7 60%, #f4a582 70%, #d6604d 80%, #b2182b 90%, #67001f); }
.m7 { background: linear-gradient(90deg, #003c30, #01665e 10%, #35978f 20%, #80cdc1 30%, #c7eae5 40%, #f5f5f5 50%, #f6e8c3 60%, #dfc27d 70%, #bf812d 80%, #8c510a 90%, #543005); }
.m8 { background: linear-gradient(90deg, #78ceff, #6faed2 10%, #3e697f 25%, #303f46 40%, #303030 51%, #573f34 63%, #9e654b 77%, #f39367 92%, #ffb27b); }
.m9 { background: linear-gradient(90deg, #ffd5ff, #b3a0d4 16%, #6a6eb2 32%, #061f7d 50%, #555458 65%, #a28a35 80%, #ffc400); }
.m10 { background: linear-gradient(90deg, #e0e7c7, #88e0e8 8%, #4ac6da 14%, #278ec2 22%, #0d4a9c 34%, #082b6d 42%, #000 50%, #3f0000 55%, #850000 62%, #b43000 70%, #d26f00 80%, #e6b100 88%, #f2cf6f 93%, #e0e7c7); }
.m11 { background: linear-gradient(90deg, #19454a, #3d7286 17%, #638fb3 28%, #adc6ec 39%, #dce8ff 46%, #fff 50%, #f3fae0 54%, #c6e4b6 64%, #85b78a 77%, #477d5a 90%, #224831); }
.m12 { background: linear-gradient(90deg, #202c27, #4d824c 17%, #77aa5a 28%, #a4c966 36%, #e1e48c 50%, #f5f0cf 59%, #fff 63%, #d9f8f3 66%, #a6d7db 74%, #5f7e8f 86%, #222b49); }
.m13 { background: linear-gradient(90deg, #222330, #3c5962 10%, #508059 21%, #78ad76 32%, #abc585 42%, #e6e99f 53%, #faf0e5 64%, #c1b7a4 72%, #897364 83%, #67463e 92%, #492026); }
.m14 { background: linear-gradient(90deg, #fff, #fdffd0 7%, #f7f48f 20%, #f5ca4b 34%, #eda01f 48%, #e66b00 62%, #bd3500 75%, #850e08 88%, #3d0718); }
.m15 { background: linear-gradient(90deg, #1f29e6 13%, #2142e6 13% 23%, #2171e6 23% 29%, #21a7e6 29% 35%, #21dfe6 35% 42%, #40dd94 42% 48%, #29dc5e 48% 54%, #22da36 54% 61%, #69da48 61% 67%, #a1dc49 67% 74%, #d0dc47 74% 80%, #cf8a47 80% 86%, #d3563d 86% 92%, #cf2639 92% 97%, #9b2938 97%); }
```
